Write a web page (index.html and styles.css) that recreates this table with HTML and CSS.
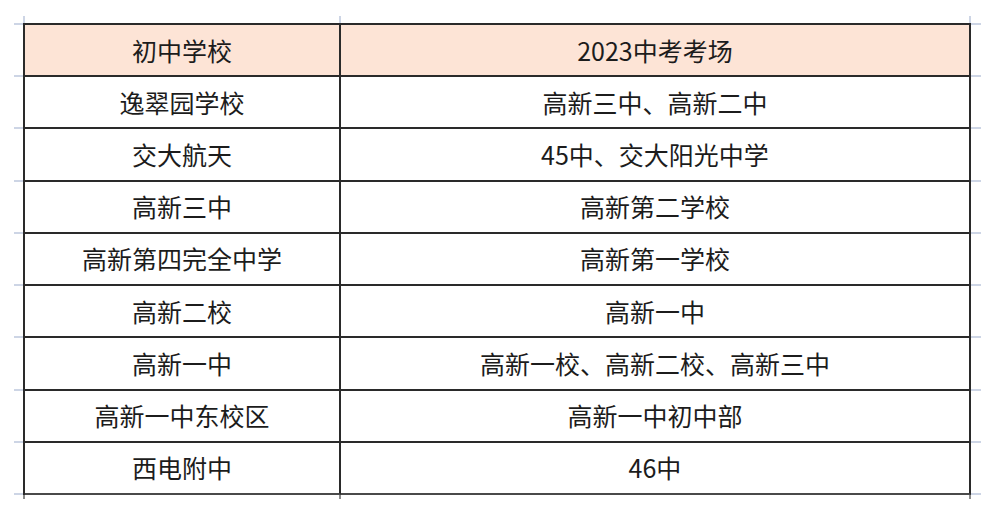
FILE: index.html
```html
<!DOCTYPE html>
<html lang="zh-CN">
<head>
<meta charset="utf-8">
<title>2023中考考场</title>
<link rel="stylesheet" href="styles.css">
</head>
<body>
<div class="sheet">
  <div class="table">
    <div class="cell head">初中学校</div>
    <div class="cell head">2023中考考场</div>
    <div class="cell">逸翠园学校</div>
    <div class="cell">高新三中、高新二中</div>
    <div class="cell">交大航天</div>
    <div class="cell">45中、交大阳光中学</div>
    <div class="cell">高新三中</div>
    <div class="cell">高新第二学校</div>
    <div class="cell">高新第四完全中学</div>
    <div class="cell">高新第一学校</div>
    <div class="cell">高新二校</div>
    <div class="cell">高新一中</div>
    <div class="cell">高新一中</div>
    <div class="cell">高新一校、高新二校、高新三中</div>
    <div class="cell">高新一中东校区</div>
    <div class="cell">高新一中初中部</div>
    <div class="cell last">西电附中</div>
    <div class="cell last">46中</div>
  </div>
</div>
</body>
</html>
```

FILE: styles.css
```css
html, body {
  margin: 0;
  padding: 0;
  background: #ffffff;
}

body {
  font-family: "Noto Sans CJK SC", "Noto Sans", sans-serif;
  color: #1c1c1c;
}

.sheet {
  margin: 16px 0 0 14px;
  width: 948px;
  padding: 7px 10px 4px 9px;
  background:
    /* top vertical ticks */
    linear-gradient(#cdd5e5, #cdd5e5) 9px 0 / 2px 7px no-repeat,
    linear-gradient(#cdd5e5, #cdd5e5) 325px 0 / 2px 7px no-repeat,
    linear-gradient(#cdd5e5, #cdd5e5) 955px 0 / 2px 7px no-repeat,
    /* bottom continuation of the borders */
    linear-gradient(#8a8a8a, #8a8a8a) 9px 100% / 2px 4px no-repeat,
    linear-gradient(#8a8a8a, #8a8a8a) 325px 100% / 2px 4px no-repeat,
    linear-gradient(#8a8a8a, #8a8a8a) 955px 100% / 2px 4px no-repeat,
    /* left horizontal ticks */
    repeating-linear-gradient(to bottom, #cdd5e5 0 2px, transparent 2px 52.22px) 0 7px / 9px 472px no-repeat,
    /* right horizontal ticks */
    repeating-linear-gradient(to bottom, #cdd5e5 0 2px, transparent 2px 52.22px) 957px 7px / 10px 472px no-repeat;
}

.table {
  display: grid;
  grid-template-columns: 316px 630px;
  grid-template-rows: repeat(9, 52.22px);
  border-top: 2px solid #2a2a2a;
  border-left: 2px solid #2a2a2a;
  background: #ffffff;
}

.cell {
  display: flex;
  align-items: center;
  justify-content: center;
  border-right: 2px solid #2a2a2a;
  border-bottom: 2px solid #2a2a2a;
  font-size: 25px;
  line-height: 1;
  white-space: nowrap;
}

.head {
  background: #fde4d6;
}

.last {
  border-bottom-color: #4a4a4a;
}
```
